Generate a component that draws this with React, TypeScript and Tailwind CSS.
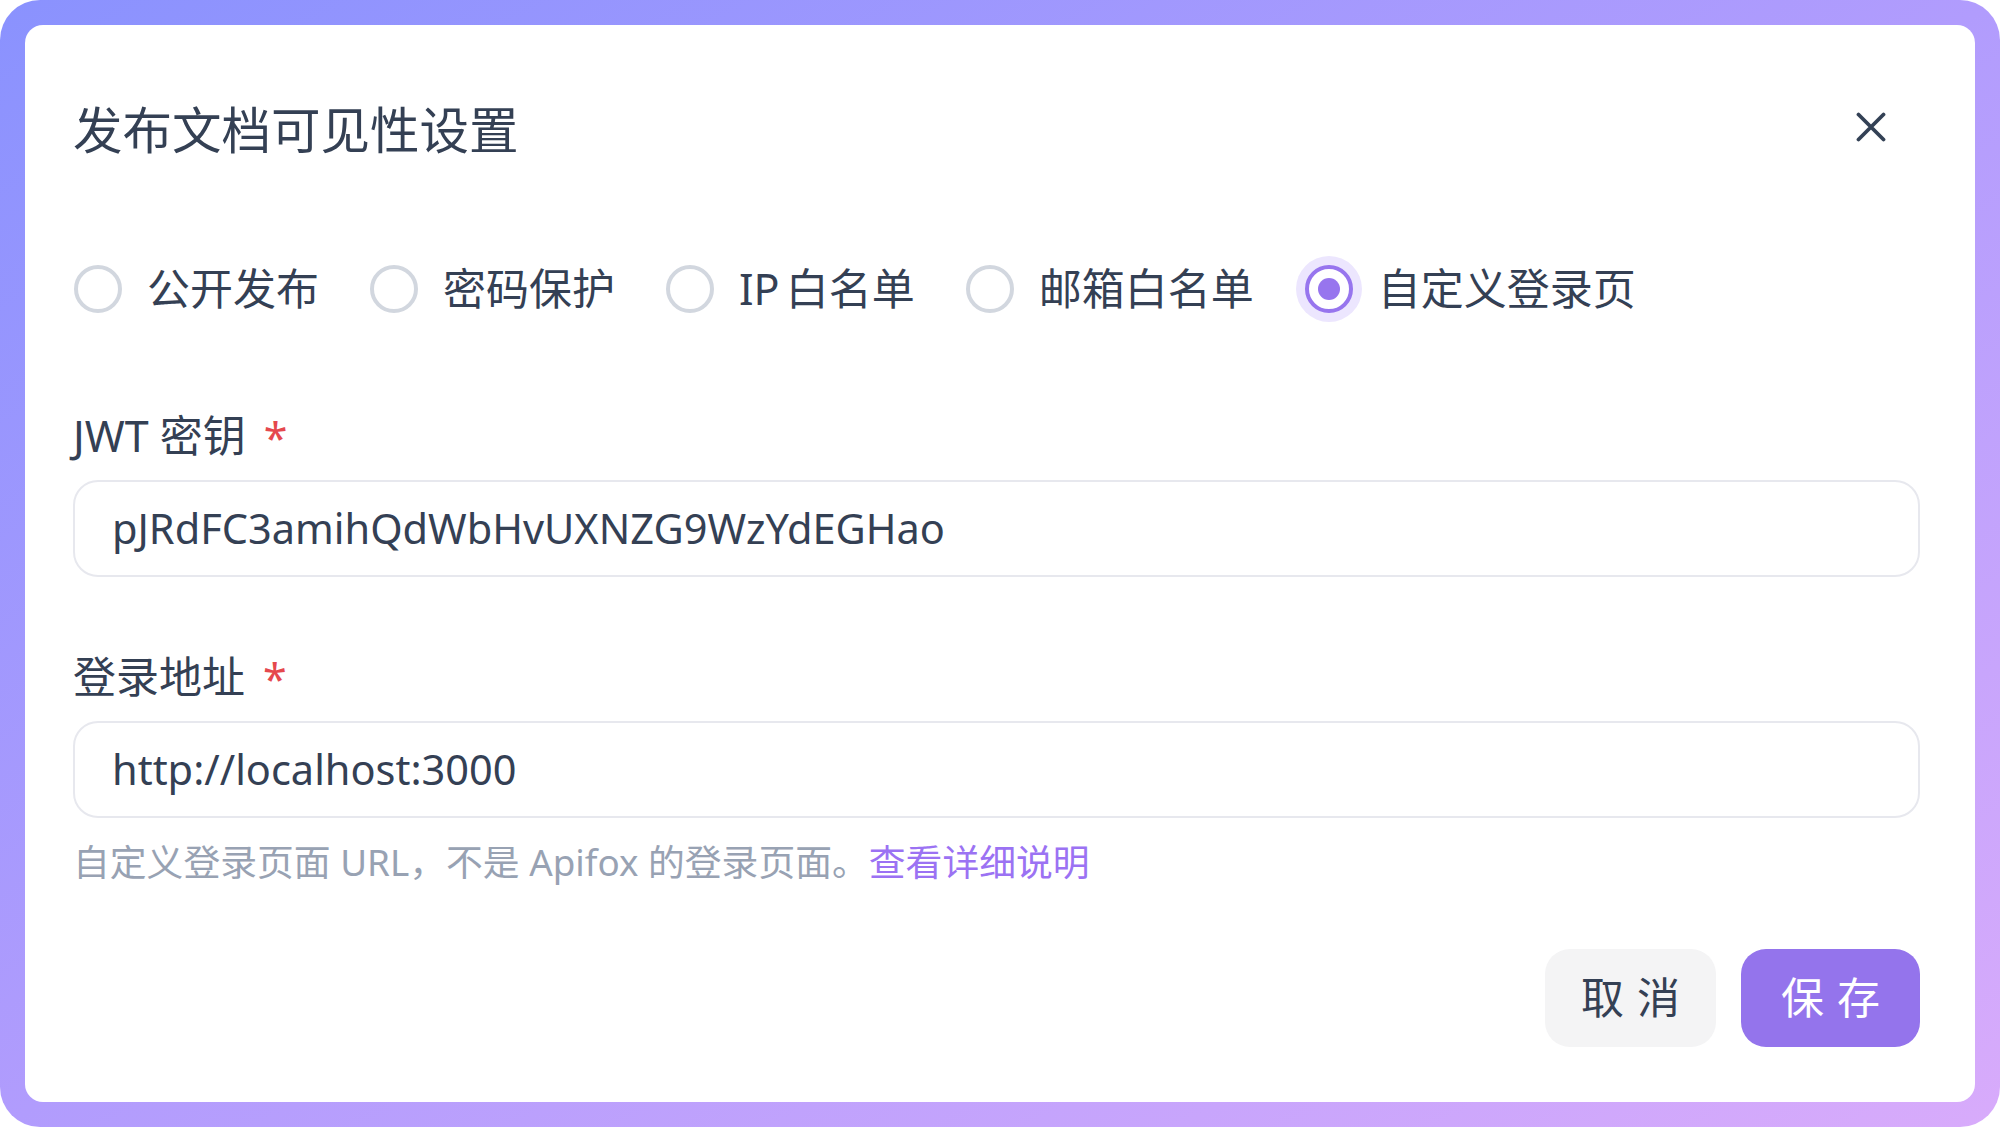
import React, { useState } from "react";

const FONT = { fontFamily: '"Noto Sans", "Noto Sans CJK SC", sans-serif' };

const OPTIONS = ["公开发布", "密码保护", "IP 白名单", "邮箱白名单", "自定义登录页"];

function Radio({ checked }: { checked: boolean }) {
  if (checked) {
    return (
      <span className="flex h-[48px] w-[48px] shrink-0 items-center justify-center rounded-full border-[4px] border-[#9775ee] bg-white ring-[9px] ring-[#ece6fe]">
        <span className="h-[22px] w-[22px] rounded-full bg-[#9775ee]" />
      </span>
    );
  }
  return <span className="h-[48px] w-[48px] shrink-0 rounded-full border-[4px] border-[#d2d7df] bg-white" />;
}

function Field({ label, value }: { label: string; value: string }) {
  return (
    <>
      <div className="flex h-[56px] items-center text-[43px] leading-[56px] text-[#344054]">
        <span>{label}</span>
        <span className="ml-[18px] mt-[4px] text-[#e5484d]">*</span>
      </div>
      <div className="mt-[16px] flex h-[97px] items-center rounded-[25px] border-2 border-[#e7e8ee] bg-white px-[37px] text-[41.5px] text-[#344054]">
        {value}
      </div>
    </>
  );
}

export default function App() {
  const [mode, setMode] = useState(4);

  return (
    <div
      style={FONT}
      className="h-[1127px] w-[2000px] rounded-[40px] bg-linear-to-br from-[#8a92fe] via-[#b19cfd] to-[#d8abfb] p-[25px]"
    >
      <div className="flex h-full flex-col rounded-[18px] bg-white pb-[55px] pl-[48px] pr-[55px] pt-[70px]">
        {/* Header */}
        <div className="flex h-[70px] items-center justify-between">
          <h1 className="text-[49.5px] leading-[70px] text-[#344054]">发布文档可见性设置</h1>
          <button className="mr-[34px] mt-[-6px] text-[#334155]">
            <svg width="30" height="30" viewBox="0 0 30 30" fill="none">
              <path d="M2.5 2.5 27.5 27.5M27.5 2.5 2.5 27.5" stroke="currentColor" strokeWidth="3.8" strokeLinecap="round" />
            </svg>
          </button>
        </div>

        {/* Visibility options */}
        <div className="mt-[90px] flex h-[68px] items-center gap-[51px] pl-[1px]">
          {OPTIONS.map((opt, i) => (
            <label
              key={opt}
              onClick={() => setMode(i)}
              className="flex cursor-pointer items-center gap-[25px] text-[43px] text-[#344054] [word-spacing:-5px]"
            >
              <Radio checked={mode === i} />
              <span>{opt}</span>
            </label>
          ))}
        </div>

        <div className="mt-[85px]">
          <Field label="JWT 密钥" value="pJRdFC3amihQdWbHvUXNZG9WzYdEGHao" />
        </div>

        <div className="mt-[72px]">
          <Field label="登录地址" value="http://localhost:3000" />
        </div>

        <p className="mt-[19px] h-[50px] text-[36.8px] leading-[50px] text-[#98a2b3]">
          自定义登录页面 URL，不是 Apifox 的登录页面。
          <a className="text-[#9b72f3]">查看详细说明</a>
        </p>

        {/* Footer */}
        <div className="mt-[62px] flex justify-end gap-[25px]">
          <button className="flex h-[98px] w-[171px] items-center justify-center gap-[13px] rounded-[25px] bg-[#f4f4f5] text-[43px] text-[#344054]">
            <span>取</span>
            <span>消</span>
          </button>
          <button className="flex h-[98px] w-[179px] items-center justify-center gap-[13px] rounded-[25px] bg-[#9474ec] text-[43px] text-white">
            <span>保</span>
            <span>存</span>
          </button>
        </div>
      </div>
    </div>
  );
}
